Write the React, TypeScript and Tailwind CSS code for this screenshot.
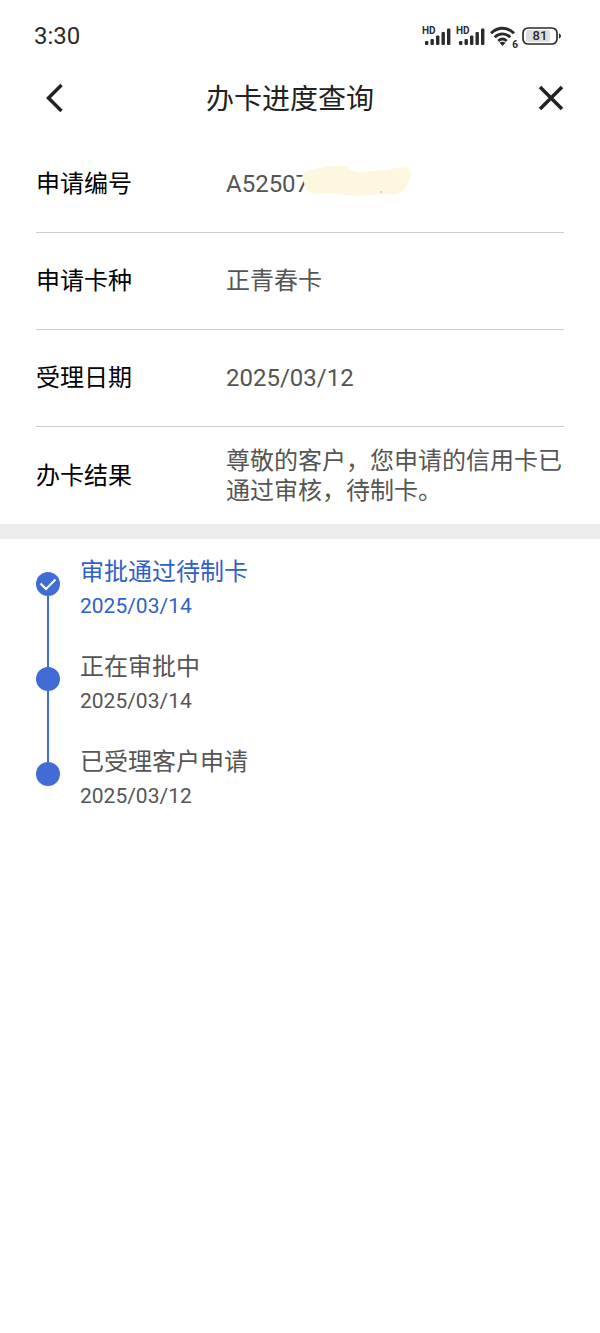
import React from "react"

type InfoType = {
    label: string
    value: string
    masked?: boolean
}

type StepType = {
    title: string
    date: string
    active?: boolean
}

const infos: InfoType[] = [
    { label: "申请编号", value: "A52507", masked: true },
    { label: "申请卡种", value: "正青春卡" },
    { label: "受理日期", value: "2025/03/12" },
    { label: "办卡结果", value: "尊敬的客户，您申请的信用卡已通过审核，待制卡。" }
]

const steps: StepType[] = [
    { title: "审批通过待制卡", date: "2025/03/14", active: true },
    { title: "正在审批中", date: "2025/03/14" },
    { title: "已受理客户申请", date: "2025/03/12" }
]

const Signal = () => (
    <div className="relative">
        <span className="absolute left-0 top-0 text-[10px] leading-[10px] font-bold">HD</span>
        <svg width="30" height="20" viewBox="0 0 30 20" fill="currentColor">
            <rect x="3" y="15" width="3.400" height="4" rx="1" />
            <rect x="8.500" y="13" width="3.400" height="6" rx="1" />
            <rect x="14" y="9.500" width="3.400" height="9.500" rx="1" />
            <rect x="19.500" y="6" width="3.400" height="13" rx="1" />
            <rect x="25" y="2.500" width="3.400" height="16.500" rx="1" />
        </svg>
    </div>
)

const Wifi = () => (
    <div className="relative">
        <svg width="28" height="20" viewBox="0 0 28 20" fill="none" stroke="currentColor" strokeWidth="2.900">
            <path d="M1 7.200C8 .6 17 .6 24 7.200" />
            <path d="M4.700 11.200c4.700-4.500 10.900-4.500 15.600 0" />
            <path d="M8.300 15c2.600-2.400 5.800-2.400 8.400 0" />
            <path d="M12.500 20l-3-3.200c1.700-1.500 4.300-1.500 6 0z" fill="currentColor" stroke="none" />
        </svg>
        <span className="absolute right-0 -bottom-1 text-[10px] leading-[10px] font-bold">6</span>
    </div>
)

const Battery = () => (
    <div className="relative w-10 h-[18px]">
        <svg width="40" height="18" viewBox="0 0 40 18" fill="none">
            <rect x="4" y="3" width="24" height="12" rx="2" fill="#dedede" />
            <rect x="1" y="1" width="34" height="16" rx="5" stroke="currentColor" strokeWidth="1.700" />
            <path d="M37 6.500c2.600.5 2.600 4.500 0 5z" fill="currentColor" />
        </svg>
        <span className="absolute inset-y-0 left-0 w-9 text-center text-[13px] leading-[18px] font-medium">81</span>
    </div>
)

const StatusBar = () => (
    <div className="flex items-center justify-between h-[71px] pl-[34px] pr-[38px] text-[#2b2b2b]">
        <span className="text-2xl">3:30</span>
        <div className="flex items-center gap-1">
            <Signal />
            <Signal />
            <Wifi />
            <Battery />
        </div>
    </div>
)

const InfoRow = ({ label, value, masked }: InfoType) => (
    <div className="flex items-center h-[97px] border-b border-[#cccccc] last:border-b-0">
        <dt className="w-[190px] shrink-0 text-black">{label}</dt>
        <dd className="relative flex-1 leading-[30px] text-[#555555]">
            {value}
            {/* Hide the rest of the application number */}
            {masked && (
                <svg
                    className="absolute left-[74px] -top-1"
                    width="112"
                    height="34"
                    viewBox="0 0 112 34"
                    fill="#fef7df"
                >
                    <path d="M3 15C0 9 6 5 15 4C26 2 36 0 44 1C49 2 52 7 58 7L88 5C96 2 105 1 109 4C113 10 109 17 105 23C102 29 94 30 86 29C76 29 66 31 54 31C44 30 36 28 27 28C18 29 8 30 6 23Z" />
                    <circle cx="81" cy="27" r="1" fill="#c9c5b5" />
                </svg>
            )}
        </dd>
    </div>
)

const Step = ({ title, date, active }: StepType) => (
    <li className="group flex h-[95px]">
        <div className="relative flex justify-center w-6 mr-5 pt-[18px]">
            <span className="absolute top-[30px] h-24 w-[2px] bg-[#416cd6] group-last:hidden" />
            <span className="relative flex items-center justify-center size-6 rounded-full bg-[#416cd6]">
                {active && (
                    <svg width="24" height="24" viewBox="0 0 24 24" fill="none" stroke="white" strokeWidth="2">
                        <path d="M4.500 11.500L10 17L19.500 7.500" />
                    </svg>
                )}
            </span>
        </div>
        <div className={active ? "leading-9 text-[#3060cc]" : "leading-9 text-[#555555]"}>
            <p>{title}</p>
            <p className="text-[21px] leading-8">{date}</p>
        </div>
    </li>
)

const App = () => {
    return (
        <div className="min-h-screen bg-white text-2xl font-[Roboto,'Noto_Sans_CJK_SC',sans-serif]">
            <StatusBar />

            {/* Header */}
            <header className="flex items-center h-[53px] mb-3 px-9 text-[#222222]">
                <button type="button" aria-label="返回" className="flex justify-end w-7">
                    <svg width="20" height="32" viewBox="0 0 20 32" fill="none" stroke="currentColor" strokeWidth="3.500">
                        <path d="M17.500 3L4.500 16L17.500 29" />
                    </svg>
                </button>
                <h1 className="flex-1 pt-1 text-center text-[28px]">办卡进度查询</h1>
                <button type="button" aria-label="关闭" className="flex justify-end w-12">
                    <svg width="26" height="26" viewBox="0 0 26 26" fill="none" stroke="currentColor" strokeWidth="3.500">
                        <path d="M2 2L24 24M24 2L2 24" />
                    </svg>
                </button>
            </header>

            {/* Application info */}
            <dl className="px-9">
                {infos.map(info => (
                    <InfoRow key={info.label} {...info} />
                ))}
            </dl>

            <div className="h-[15px] bg-[#ededed]" />

            {/* Progress */}
            <ol className="px-9 pt-[15px]">
                {steps.map(step => (
                    <Step key={step.title} {...step} />
                ))}
            </ol>
        </div>
    )
}

export default App
